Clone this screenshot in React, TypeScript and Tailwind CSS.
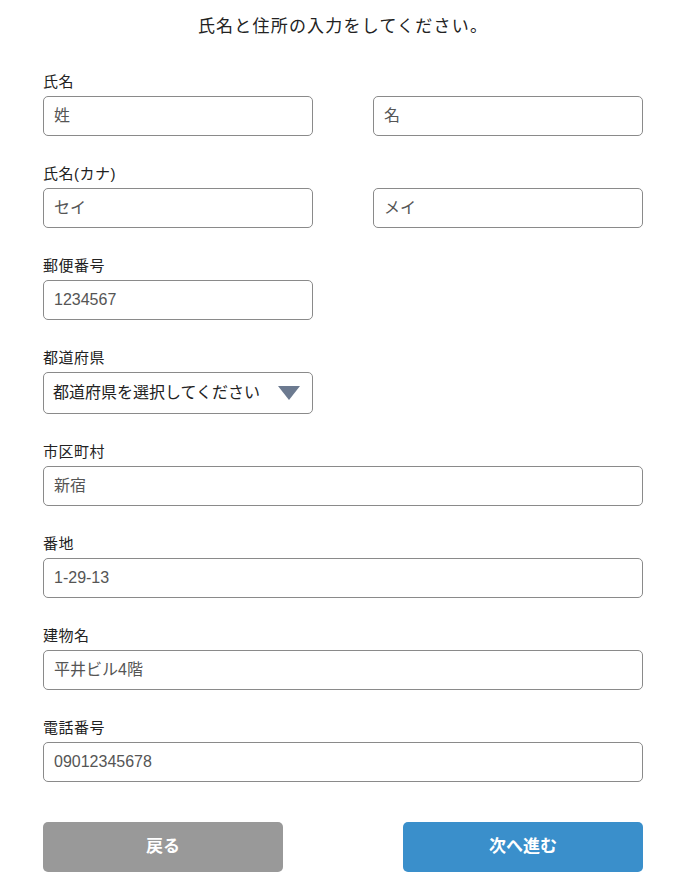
import React from "react";

const font = { fontFamily: '"Liberation Sans", "Noto Sans CJK JP", sans-serif' };

function Label({ children }: { children: React.ReactNode }) {
  return <div className="h-5 text-[15px] leading-5 text-[#222] mb-1 tracking-[0.5px]">{children}</div>;
}

function Input({ value, wide }: { value: string; wide?: boolean }) {
  return (
    <div
      className={`${wide ? "w-[600px]" : "w-[270px]"} h-10 border border-[#8a8a8a] rounded-[5px] flex items-center pl-[10px] text-[16px] text-[#555]`}
    >
      {value}
    </div>
  );
}

export default function App() {
  return (
    <div className="bg-white w-[700px] h-[892px] overflow-hidden" style={font}>
      <div className="h-[54px] w-[686px] flex items-center justify-center text-[17px] text-[#222] tracking-[1.2px]">
        氏名と住所の入力をしてください。
      </div>
      <div className="pl-[43px] pt-[18px] w-[643px] flex flex-col">
        <div className="mb-7">
          <Label>氏名</Label>
          <div className="flex justify-between w-[600px]">
            <Input value="姓" />
            <Input value="名" />
          </div>
        </div>
        <div className="mb-7">
          <Label>氏名(カナ)</Label>
          <div className="flex justify-between w-[600px]">
            <Input value="セイ" />
            <Input value="メイ" />
          </div>
        </div>
        <div className="mb-7">
          <Label>郵便番号</Label>
          <Input value="1234567" />
        </div>
        <div className="mb-7">
          <Label>都道府県</Label>
          <div className="w-[270px] h-[42px] border border-[#8a8a8a] rounded-[5px] flex items-center justify-between pl-[9px] pr-[12px] text-[16px] text-[#222]">
            <span>都道府県を選択してください</span>
            <svg width="22" height="14" viewBox="0 0 22 14">
              <polygon points="0,0 22,0 11,14" fill="#6c7a90" />
            </svg>
          </div>
        </div>
        <div className="mb-7">
          <Label>市区町村</Label>
          <Input value="新宿" wide />
        </div>
        <div className="mb-7">
          <Label>番地</Label>
          <Input value="1-29-13" wide />
        </div>
        <div className="mb-7">
          <Label>建物名</Label>
          <Input value="平井ビル4階" wide />
        </div>
        <div>
          <Label>電話番号</Label>
          <Input value="09012345678" wide />
        </div>
        <div className="mt-10 flex justify-between w-[600px]">
          <button className="w-[240px] h-[50px] rounded-[5px] bg-[#999999] text-white font-bold text-[17px]">
            戻る
          </button>
          <button className="w-[240px] h-[50px] rounded-[5px] bg-[#3a8fcb] text-white font-bold text-[17px]">
            次へ進む
          </button>
        </div>
      </div>
    </div>
  );
}
